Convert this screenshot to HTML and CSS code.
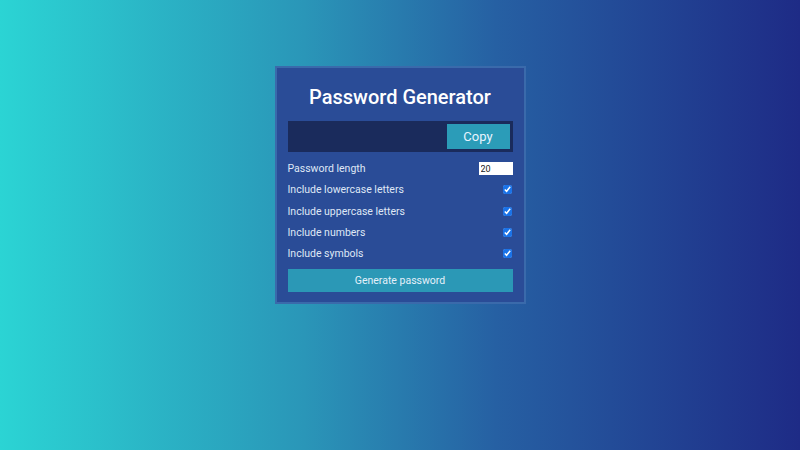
FILE: index.html
```html
<!DOCTYPE html>
<html>
<head>
<meta charset="utf-8">
<link rel="stylesheet" href="styles.css">
</head>
<body>
<div class="page">
  <div class="card">
    <h1 class="title">Password Generator</h1>
    <div class="result">
      <span class="result-text"></span>
      <button class="copy">Copy</button>
    </div>
    <div class="row">
      <label>Password length</label>
      <input class="len" type="number" value="20">
    </div>
    <div class="row">
      <label>Include lowercase letters</label>
      <input class="chk" type="checkbox" checked>
    </div>
    <div class="row">
      <label>Include uppercase letters</label>
      <input class="chk" type="checkbox" checked>
    </div>
    <div class="row">
      <label>Include numbers</label>
      <input class="chk" type="checkbox" checked>
    </div>
    <div class="row">
      <label>Include symbols</label>
      <input class="chk" type="checkbox" checked>
    </div>
    <button class="generate">Generate password</button>
  </div>
</div>
</body>
</html>
```
FILE: styles.css
```css
* { box-sizing: border-box; }
html, body { margin: 0; padding: 0; }
body {
  width: 800px;
  height: 450px;
  overflow: hidden;
  font-family: Roboto, "Liberation Sans", sans-serif;
  background: linear-gradient(90deg, #2bd4d4 0%, #2a96b8 38%, #2660a3 62%, #1e2b86 100%);
  color: #e8eef8;
}
.page {
  display: flex;
  justify-content: center;
  padding-top: 66px;
}
.card {
  width: 251px;
  height: 238px;
  background: #2a4c97;
  border: 2px solid #3a6aab;
  padding: 11px 11px 0 11px;
  display: flex;
  flex-direction: column;
}
.title {
  margin: 5px 0 0 0;
  font-size: 20px;
  font-weight: 500;
  text-align: center;
  color: #ffffff;
  line-height: 26px;
}
.result {
  margin-top: 11px;
  height: 31px;
  background: #1a2b5c;
  display: flex;
  justify-content: flex-end;
  align-items: center;
  padding: 0 3px;
}
.copy {
  width: 63px;
  height: 25px;
  background: #2b9cb8;
  border: none;
  color: #e8f4ff;
  font-family: inherit;
  font-size: 13px;
  padding: 0;
}
.row {
  display: flex;
  justify-content: space-between;
  align-items: center;
  height: 21.3px;
  font-size: 10.5px;
  color: #dfe7f5;
}
.result + .row { margin-top: 6px; }
.len {
  width: 34px;
  height: 13px;
  border: none;
  background: #fff;
  font-size: 9px;
  padding: 0 2px;
  margin: 0;
  color: #222;
  font-family: inherit;
}
.chk {
  width: 9px;
  height: 9px;
  margin: 0 1px 0 0;
  accent-color: #1a73e8;
}
.generate {
  margin-top: 5px;
  height: 23px;
  background: #2b98b6;
  border: none;
  color: #e4f0fa;
  font-family: inherit;
  font-size: 10.5px;
  padding: 0;
}
```
